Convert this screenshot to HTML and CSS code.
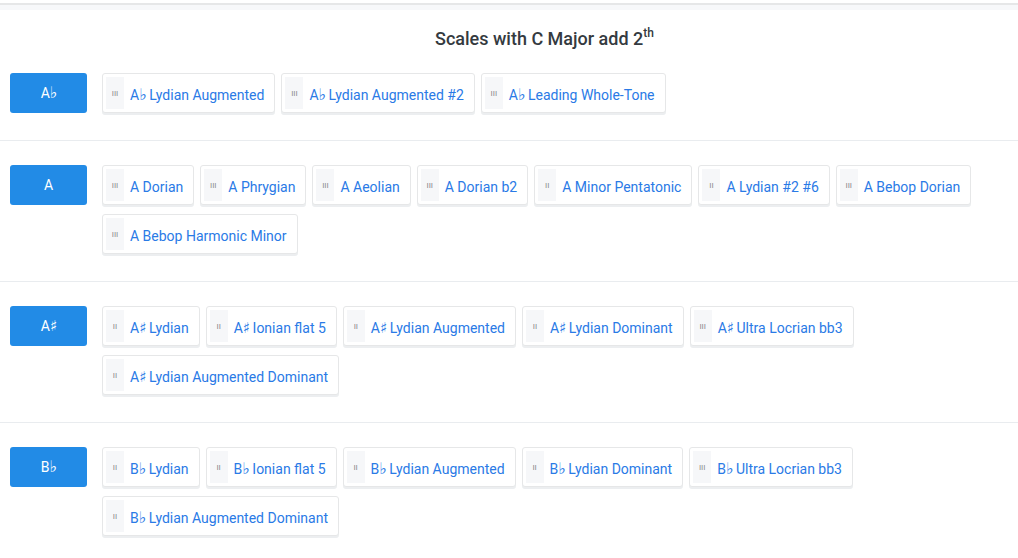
FILE: index.html
```html
<!DOCTYPE html>
<html>
<head>
<meta charset="utf-8">
<link rel="stylesheet" href="styles.css">
</head>
<body>
<div class="topbar"></div>
<h2 class="title">Scales with C Major add 2<sup>th</sup></h2>

<section class="row first">
  <div class="key"><span>A<span class="acc">♭</span></span></div>
  <div class="chips">
    <a class="chip"><span class="deg">III</span><span class="name">A<span class="acc">♭</span> Lydian Augmented</span></a>
    <a class="chip"><span class="deg">III</span><span class="name">A<span class="acc">♭</span> Lydian Augmented #2</span></a>
    <a class="chip"><span class="deg">III</span><span class="name">A<span class="acc">♭</span> Leading Whole-Tone</span></a>
  </div>
</section>

<section class="row">
  <div class="key"><span>A</span></div>
  <div class="chips">
    <a class="chip"><span class="deg">III</span><span class="name">A Dorian</span></a>
    <a class="chip"><span class="deg">III</span><span class="name">A Phrygian</span></a>
    <a class="chip"><span class="deg">III</span><span class="name">A Aeolian</span></a>
    <a class="chip"><span class="deg">III</span><span class="name">A Dorian b2</span></a>
    <a class="chip"><span class="deg">II</span><span class="name">A Minor Pentatonic</span></a>
    <a class="chip"><span class="deg">II</span><span class="name">A Lydian #2 #6</span></a>
    <a class="chip"><span class="deg">III</span><span class="name">A Bebop Dorian</span></a>
    <a class="chip"><span class="deg">III</span><span class="name">A Bebop Harmonic Minor</span></a>
  </div>
</section>

<section class="row">
  <div class="key"><span>A<span class="acc sharp">♯</span></span></div>
  <div class="chips">
    <a class="chip"><span class="deg">II</span><span class="name">A<span class="acc sharp">♯</span> Lydian</span></a>
    <a class="chip"><span class="deg">II</span><span class="name">A<span class="acc sharp">♯</span> Ionian flat 5</span></a>
    <a class="chip"><span class="deg">II</span><span class="name">A<span class="acc sharp">♯</span> Lydian Augmented</span></a>
    <a class="chip"><span class="deg">II</span><span class="name">A<span class="acc sharp">♯</span> Lydian Dominant</span></a>
    <a class="chip"><span class="deg">III</span><span class="name">A<span class="acc sharp">♯</span> Ultra Locrian bb3</span></a>
    <a class="chip"><span class="deg">II</span><span class="name">A<span class="acc sharp">♯</span> Lydian Augmented Dominant</span></a>
  </div>
</section>

<section class="row">
  <div class="key"><span>B<span class="acc">♭</span></span></div>
  <div class="chips">
    <a class="chip"><span class="deg">II</span><span class="name">B<span class="acc">♭</span> Lydian</span></a>
    <a class="chip"><span class="deg">II</span><span class="name">B<span class="acc">♭</span> Ionian flat 5</span></a>
    <a class="chip"><span class="deg">II</span><span class="name">B<span class="acc">♭</span> Lydian Augmented</span></a>
    <a class="chip"><span class="deg">II</span><span class="name">B<span class="acc">♭</span> Lydian Dominant</span></a>
    <a class="chip"><span class="deg">III</span><span class="name">B<span class="acc">♭</span> Ultra Locrian bb3</span></a>
    <a class="chip"><span class="deg">II</span><span class="name">B<span class="acc">♭</span> Lydian Augmented Dominant</span></a>
  </div>
</section>
</body>
</html>
```

FILE: styles.css
```css
html, body {
  margin: 0;
  padding: 0;
  background: #fff;
  font-family: Roboto, "DejaVu Sans", sans-serif;
}

.topbar {
  height: 7px;
  margin-top: 3px;
  border-top: 2px solid #e6e7e8;
  background: #f7f8fa;
  box-sizing: border-box;
}

.title {
  margin: 0;
  padding: 18px 0 0 71px;
  text-align: center;
  font-size: 18px;
  line-height: 21px;
  font-weight: 500;
  color: #343a40;
}

.title sup {
  font-size: 12px;
  line-height: 0;
  position: relative;
  top: -1px;
}

.row {
  display: flex;
  align-items: flex-start;
  gap: 15px;
  padding: 24px 10px 27px;
  border-bottom: 1px solid #e9ecef;
}

.row.first {
  padding-top: 24px;
}

.acc {
  font-family: "DejaVu Sans", sans-serif;
  font-size: 16px;
  letter-spacing: -1px;
  line-height: 0;
}

.acc.sharp {
  font-size: 15px;
  letter-spacing: -1px;
}

.key {
  flex: 0 0 77px;
  height: 40px;
  background: #228be6;
  border-radius: 3px;
  color: #fff;
  font-size: 14px;
  display: flex;
  align-items: center;
  justify-content: center;
}

.chips {
  display: flex;
  flex-wrap: wrap;
  gap: 9px 6px;
  flex: 1;
}

.chip {
  display: flex;
  align-items: stretch;
  height: 40px;
  box-sizing: border-box;
  padding: 3px 10px 3px 3px;
  border: 1px solid #e6e7e8;
  border-radius: 3px;
  box-shadow: 0 2px 0 #eceef0;
  background: #fff;
  color: #2a7ae6;
  font-size: 14px;
  white-space: nowrap;
}

.name {
  padding-top: 1px;
  line-height: 34px;
}

.deg {
  width: 18px;
  margin-right: 6px;
  background: #f6f7f9;
  color: #8a8a8a;
  font-size: 8px;
  text-align: center;
  line-height: 34px;
}
```
